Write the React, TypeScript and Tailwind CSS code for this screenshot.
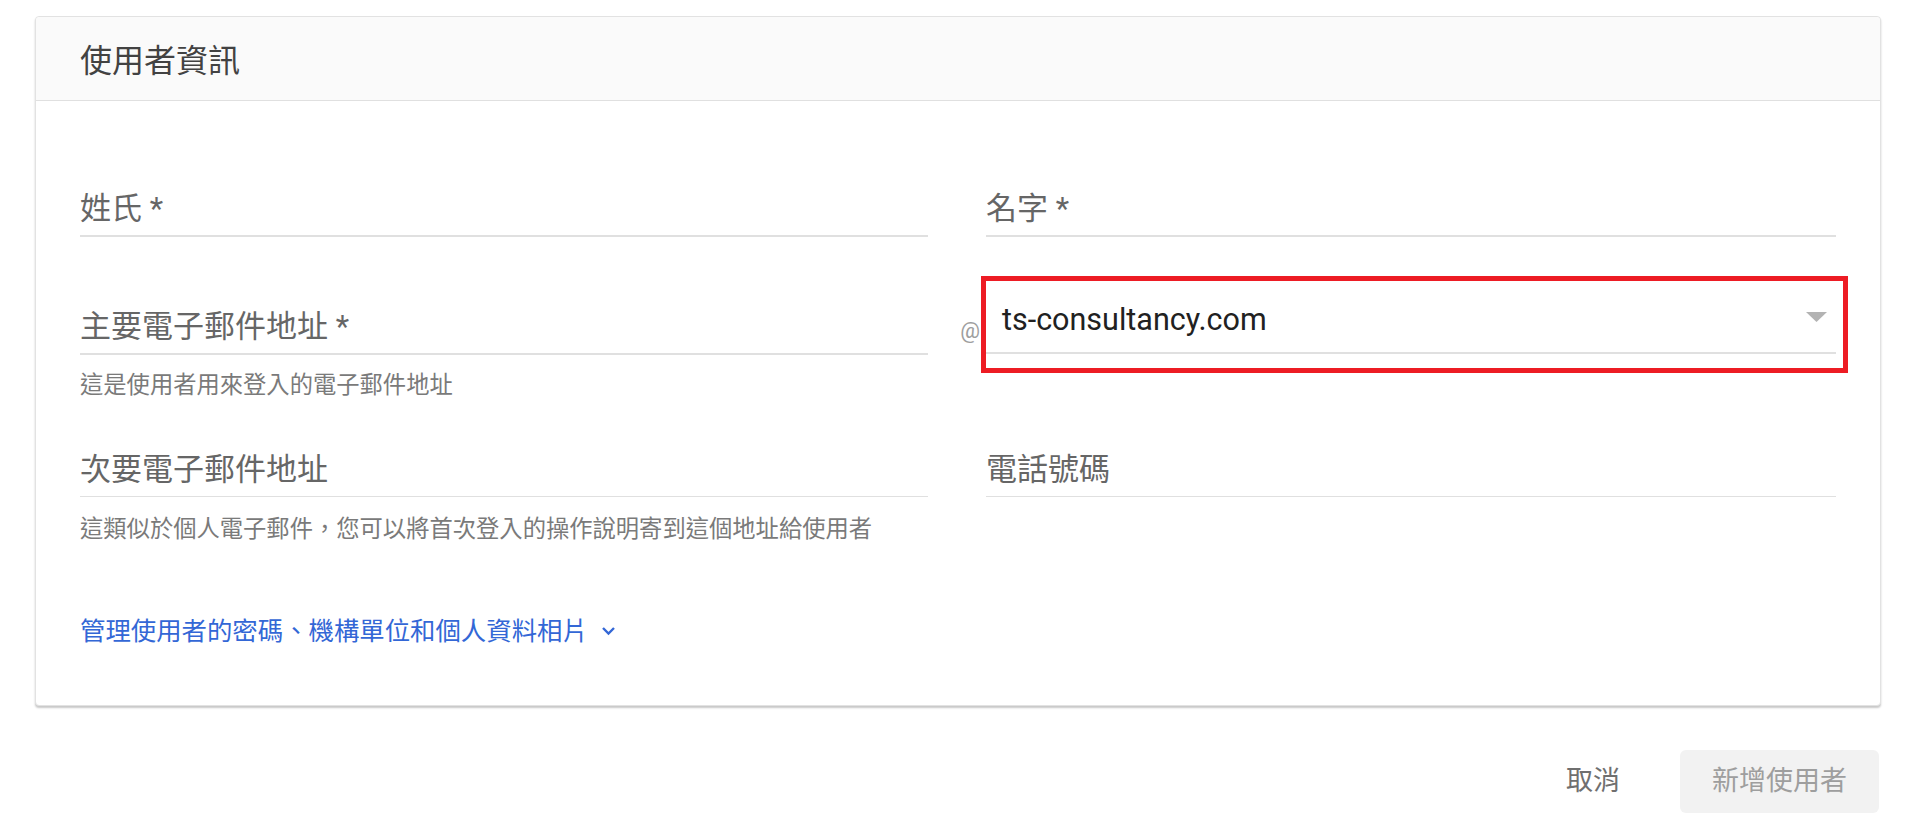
import React from 'react';

function Field({ label, thin }: { label: string; thin?: boolean }) {
    return (
        <div className={thin ? 'border-b border-[#e0e0e0] pb-[6px]' : 'border-b-2 border-[#e0e0e0] pb-[6px]'}>
            <div className="text-[31px] leading-[40px] text-[#666666]">{label}</div>
        </div>
    );
}

function Helper({ children, className }: { children: React.ReactNode; className: string }) {
    return <p className={`text-[23.3px] leading-[30px] text-[#7a7a7a] ${className}`}>{children}</p>;
}

export default function App() {
    return (
        <main className="min-h-screen bg-white pt-[16px] font-['Roboto','Noto_Sans_CJK_TC',sans-serif]">
            {/* User info card */}
            <section className="ml-[35px] w-[1846px] rounded-[4px] border border-[#e2e2e2] bg-white shadow-[0_2px_2px_rgba(0,0,0,0.22)]">
                <div className="h-[84px] rounded-t-[4px] border-b border-[#e0e0e0] bg-[#fafafa] px-[44px] pt-[24px]">
                    <h2 className="text-[32px] leading-[40px] text-[#424242]">使用者資訊</h2>
                </div>

                <div className="px-[44px] pt-[88px] pb-[57px]">
                    {/* Name row */}
                    <div className="flex">
                        <div className="w-[848px]">
                            <Field label="姓氏 *" />
                        </div>
                        <div className="w-[58px]" />
                        <div className="flex-1">
                            <Field label="名字 *" />
                        </div>
                    </div>

                    {/* Primary email row */}
                    <div className="mt-[39px] flex items-start">
                        <div className="w-[848px] pt-[31px]">
                            <Field label="主要電子郵件地址 *" />
                            <Helper className="mt-[15px]">這是使用者用來登入的電子郵件地址</Helper>
                        </div>
                        <div className="w-[58px] pt-[40px] pr-[6px] text-right text-[22px] leading-[30px] text-[#9e9e9e]">@</div>
                        <div className="flex-1">
                            <div className="-ml-[5px] -mr-[12px] border-[5px] border-[#ed1c24] pr-[7px] pb-[14px]">
                                <div className="flex items-center justify-between border-b-2 border-[#e0e0e0] pt-[19px] pb-[12px]">
                                    <span className="pl-[16px] text-[30.5px] leading-[40px] text-[#212121]">ts-consultancy.com</span>
                                    <svg width="21" height="10" viewBox="0 0 21 10" className="mr-[9px] mb-[6px]">
                                        <polygon points="0,0 21,0 10.5,10" fill="#b3b3b3" />
                                    </svg>
                                </div>
                            </div>
                        </div>
                    </div>

                    {/* Secondary email / phone row */}
                    <div className="mt-[50px] flex items-start">
                        <div className="w-[848px]">
                            <Field label="次要電子郵件地址" thin />
                            <Helper className="mt-[17px]">這類似於個人電子郵件，您可以將首次登入的操作說明寄到這個地址給使用者</Helper>
                        </div>
                        <div className="w-[58px]" />
                        <div className="flex-1">
                            <Field label="電話號碼" thin />
                        </div>
                    </div>

                    <a className="mt-[70px] inline-flex items-center gap-[13px] text-[25.4px] leading-[34px] text-[#3367d6]">
                        管理使用者的密碼、機構單位和個人資料相片
                        <svg width="15" height="10" viewBox="0 0 15 10" fill="none">
                            <polyline points="2,2 7.5,7.5 13,2" stroke="#3367d6" strokeWidth="2.4" />
                        </svg>
                    </a>
                </div>
            </section>

            {/* Actions */}
            <div className="ml-[35px] mt-[44px] flex w-[1846px] items-center justify-end">
                <button className="mr-[36px] h-[63px] px-[24px] text-[27px] text-[#6f6f6f]">取消</button>
                <button className="mr-[2px] h-[63px] w-[199px] rounded-[6px] bg-[#f2f2f2] text-[27px] text-[#9e9e9e]">新增使用者</button>
            </div>
        </main>
    );
}
